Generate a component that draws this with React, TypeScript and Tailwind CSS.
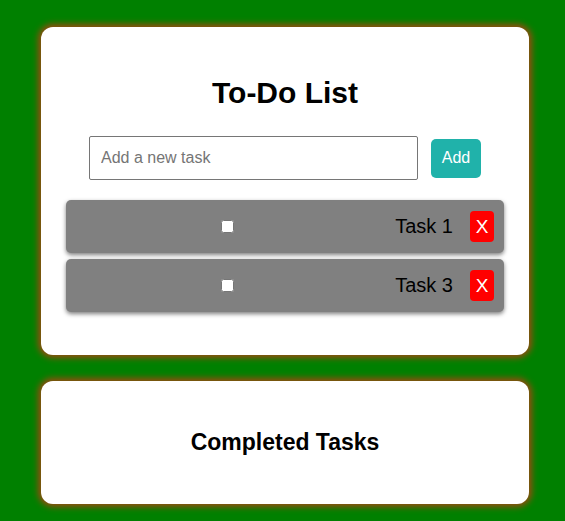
import { useState } from 'react';

interface Task {
  id: number;
  text: string;
  done: boolean;
}

export default function App() {
  const [tasks, setTasks] = useState<Task[]>([
    { id: 1, text: 'Task 1', done: false },
    { id: 3, text: 'Task 3', done: false },
  ]);
  const [input, setInput] = useState('');

  const addTask = () => {
    if (!input.trim()) return;
    setTasks([...tasks, { id: Date.now(), text: input.trim(), done: false }]);
    setInput('');
  };

  return (
    <div className="min-h-[521px] bg-[#008000] pt-[27px] pb-4 font-['Liberation_Sans',Arial,sans-serif]">
      <div className="ml-[41px] w-[488px] bg-white rounded-[12px] shadow-[0_0_6px_3px_#9a4a10] pt-[48px] pb-[43px] px-[25px]">
        <h1 className="text-center text-[30px] font-bold leading-[36px] text-black">To-Do List</h1>

        <div className="mt-[25px] flex items-center justify-center gap-[13px]">
          <input
            value={input}
            onChange={(e) => setInput(e.target.value)}
            placeholder="Add a new task"
            className="w-[329px] h-[44px] border border-[#767676] rounded-[2px] px-[11px] text-[16px] text-black placeholder:text-[#757575] outline-none"
          />
          <button
            onClick={addTask}
            className="w-[50px] h-[39px] bg-[#20b2aa] text-white text-[16px] rounded-[5px]"
          >
            Add
          </button>
        </div>

        <ul className="mt-[20px] flex flex-col gap-[6px]">
          {tasks.map((task) => (
            <li
              key={task.id}
              className="h-[53px] bg-[#808080] rounded-[5px] shadow-[0_2px_4px_rgba(0,0,0,0.5)] flex items-center pr-[10px]"
            >
              <input
                type="checkbox"
                checked={task.done}
                onChange={() =>
                  setTasks(tasks.map((t) => (t.id === task.id ? { ...t, done: !t.done } : t)))
                }
                className="ml-[155px] w-[13px] h-[13px] m-0"
              />
              <span className="flex-1 text-right text-[20px] leading-[22px] text-black pr-[17px] pb-[2px]">{task.text}</span>
              <button
                onClick={() => setTasks(tasks.filter((t) => t.id !== task.id))}
                className="w-[24px] h-[31px] bg-[#ff0000] text-white text-[19px] rounded-[4px] leading-none"
              >
                X
              </button>
            </li>
          ))}
        </ul>
      </div>

      <div className="mt-[26px] ml-[41px] w-[488px] h-[123px] bg-white rounded-[12px] shadow-[0_0_6px_3px_#9a4a10] flex items-center justify-center">
        <h2 className="text-[23px] font-bold text-black">Completed Tasks</h2>
      </div>
    </div>
  );
}
